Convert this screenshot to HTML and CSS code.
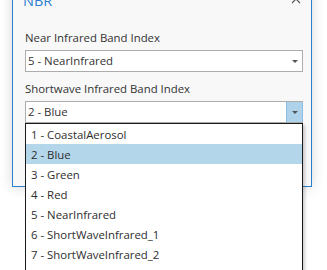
FILE: index.html
```html
<!DOCTYPE html>
<html lang="en">
<head>
    <meta charset="UTF-8">
    <title>NBR</title>
    <link rel="stylesheet" href="styles.css">
</head>
<body>

<div class="dialog">
    <div class="titlebar">
        <span class="title">NBR</span>
        <span class="close">
            <svg width="10" height="10" viewBox="0 0 10 10"><path d="M1 1 L9 9 M9 1 L1 9" stroke="#5a5a5a" stroke-width="1.2" fill="none"/></svg>
        </span>
    </div>

    <div class="content">
        <label class="field-label">Near Infrared Band Index</label>
        <div class="combo">
            <span class="combo-text">5 - NearInfrared</span>
            <span class="combo-btn"><span class="arrow"></span></span>
        </div>

        <label class="field-label second">Shortwave Infrared Band Index</label>
        <div class="combo open">
            <span class="combo-text">2 - Blue</span>
            <span class="combo-btn"><span class="arrow"></span></span>

            <!-- the list runs past the window; items below 7 are not visible -->
            <ul class="dropdown">
                <li>1 - CoastalAerosol</li>
                <li class="selected">2 - Blue</li>
                <li>3 - Green</li>
                <li>4 - Red</li>
                <li>5 - NearInfrared</li>
                <li>6 - ShortWaveInfrared_1</li>
                <li>7 - ShortWaveInfrared_2</li>
            </ul>
        </div>
    </div>
</div>

</body>
</html>
```

FILE: styles.css
```css
body {
    font-family: 'Open Sans', 'Noto Sans', sans-serif;
    font-size: 11.4px;
    margin: 0;
    padding: 0;
    background-color: #fff;
    color: #333;
    width: 327px;
    height: 270px;
    overflow: hidden;
}

.dialog {
    width: 298px;
    height: 199px;
    margin-top: -14px;
    margin-left: 12px;
    border: 1px solid #2b7fd0;
    background-color: #f8f8f8;
    box-shadow: 0 0 12px rgba(0, 0, 0, 0.16);
}

.titlebar {
    height: 30px;
    display: flex;
    justify-content: space-between;
    align-items: center;
    padding: 0 10px 0 10px;
}

.title {
    font-size: 14.5px;
    color: #2b7fd0;
    margin-top: -3px;
}

.close {
    display: flex;
    margin-top: -7px;
}

.content {
    padding: 13px 8px 0 12px;
}

.field-label {
    display: block;
    line-height: 16px;
    margin-bottom: 4px;
    color: #333;
}

.field-label.second {
    margin-top: 9px;
}

.combo {
    position: relative;
    height: 20px;
    border: 1px solid #acacac;
    background-color: #fff;
    display: flex;
    align-items: center;
}

.combo-text {
    flex: 1;
    padding-left: 2px;
    line-height: 20px;
}

.combo-btn {
    width: 15px;
    height: 20px;
    display: flex;
    align-items: center;
    justify-content: center;
}

.combo.open .combo-btn {
    background-color: #aed2ea;
    border-left: 1px solid #8cbde3;
    margin-right: -1px;
    border-right: 1px solid #8cbde3;
}

.arrow {
    width: 0;
    height: 0;
    border-left: 3px solid transparent;
    border-right: 3px solid transparent;
    border-top: 3px solid #555;
}

.dropdown {
    position: absolute;
    top: 21px;
    left: -1px;
    width: 276px;
    height: 170px;
    margin: 0;
    padding: 0;
    list-style: none;
    background-color: #fff;
    border: 1px solid #1a1a1a;
    box-shadow: 2px 2px 3px rgba(0, 0, 0, 0.2);
}

.dropdown li {
    height: 20px;
    line-height: 22px;
    padding-left: 5px;
    color: #2e2e2e;
}

.dropdown li.selected {
    background-color: #b3d6eb;
}
```
